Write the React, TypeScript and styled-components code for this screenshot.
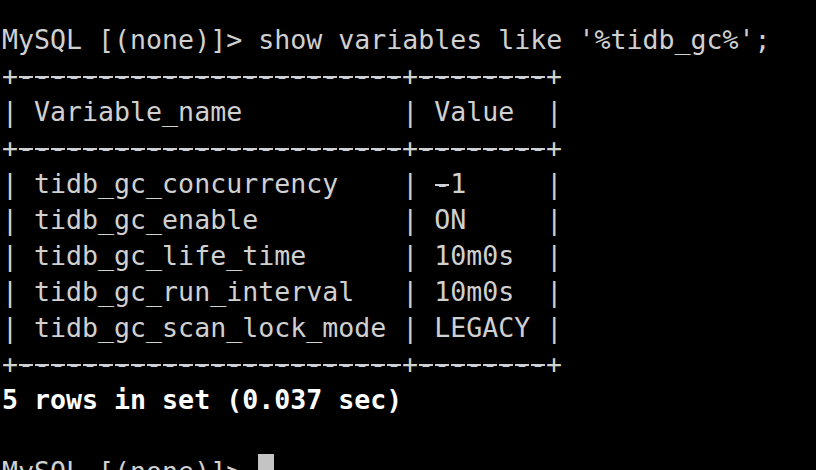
import React from "react";
import styled, { createGlobalStyle } from "styled-components";

const Global = createGlobalStyle`
  html, body {
    margin: 0;
    padding: 0;
    background: #000;
  }
  body {
    width: 816px;
    height: 470px;
    overflow: hidden;
  }
`;

const Terminal = styled.div`
  box-sizing: border-box;
  width: 816px;
  height: 470px;
  overflow: hidden;
  background: #000;
  color: #d0d0d0;
  padding: 22px 0 0 2px;
  font-family: "DejaVu Sans Mono", "Liberation Mono", monospace;
  font-size: 26.6px;
  line-height: 36px;
`;

const Line = styled.div<{ $bold?: boolean }>`
  white-space: pre;
  height: 36px;
  font-weight: ${(p) => (p.$bold ? 700 : 400)};
  color: ${(p) => (p.$bold ? "#ffffff" : "#d0d0d0")};
`;

/* terminal font draws "-" nearly cell-wide: widen it with a bar behind the glyph */
const Dash = styled.span`
  display: inline-block;
  width: 16px;
  height: 36px;
  vertical-align: top;
  background: linear-gradient(#d0d0d0, #d0d0d0) no-repeat;
  background-size: 14px 2px;
  background-position: 1px 18px;
`;

const Cursor = styled.span`
  display: inline-block;
  width: 16px;
  height: 36px;
  background: #c4c4c4;
  vertical-align: top;
`;

const renderText = (s: string) =>
  s.split(/(-)/).map((part, i) =>
    part === "-" ? <Dash key={i}>-</Dash> : <React.Fragment key={i}>{part}</React.Fragment>
  );

const lines = [
  "MySQL [(none)]> show variables like '%tidb_gc%';",
  "+------------------------+--------+",
  "| Variable_name          | Value  |",
  "+------------------------+--------+",
  "| tidb_gc_concurrency    | -1     |",
  "| tidb_gc_enable         | ON     |",
  "| tidb_gc_life_time      | 10m0s  |",
  "| tidb_gc_run_interval   | 10m0s  |",
  "| tidb_gc_scan_lock_mode | LEGACY |",
  "+------------------------+--------+",
];

export default function App() {
  return (
    <>
      <Global />
      <Terminal>
        {lines.map((l, i) => (
          <Line key={i}>{renderText(l)}</Line>
        ))}
        <Line $bold>5 rows in set (0.037 sec)</Line>
        <Line> </Line>
        <Line>
          {"MySQL [(none)]> "}
          <Cursor />
        </Line>
      </Terminal>
    </>
  );
}
